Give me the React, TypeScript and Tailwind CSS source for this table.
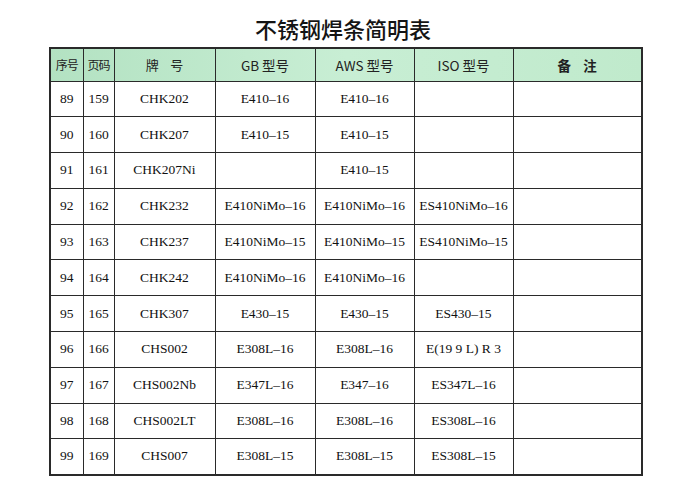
import React from 'react';

const rows: string[][] = [
  ['89', '159', 'CHK202', 'E410–16', 'E410–16', ''],
  ['90', '160', 'CHK207', 'E410–15', 'E410–15', ''],
  ['91', '161', 'CHK207Ni', '', 'E410–15', ''],
  ['92', '162', 'CHK232', 'E410NiMo–16', 'E410NiMo–16', 'ES410NiMo–16'],
  ['93', '163', 'CHK237', 'E410NiMo–15', 'E410NiMo–15', 'ES410NiMo–15'],
  ['94', '164', 'CHK242', 'E410NiMo–16', 'E410NiMo–16', ''],
  ['95', '165', 'CHK307', 'E430–15', 'E430–15', 'ES430–15'],
  ['96', '166', 'CHS002', 'E308L–16', 'E308L–16', 'E(19 9 L) R 3'],
  ['97', '167', 'CHS002Nb', 'E347L–16', 'E347–16', 'ES347L–16'],
  ['98', '168', 'CHS002LT', 'E308L–16', 'E308L–16', 'ES308L–16'],
  ['99', '169', 'CHS007', 'E308L–15', 'E308L–15', 'ES308L–15'],
];

const widths = ['w-[33px]', 'w-[31px]', 'w-[101px]', 'w-[100px]', 'w-[99px]', 'w-[99px]', 'w-[129px]'];

const App: React.FC = () => {
  return (
    <div className="w-[683px] h-[489px] bg-white overflow-hidden">
      {/* Title */}
      <div className="pl-[45px] w-[641px] pt-[14px] h-[47px]">
        <h1 className="text-center text-[22px] leading-[28px] font-medium text-[#141414] [font-family:'Noto_Sans_CJK_SC',sans-serif]">
          不锈钢焊条简明表
        </h1>
      </div>

      {/* Table */}
      <div className="ml-[49px]">
        <table className="border-collapse table-fixed w-[592px] border-2 border-[#2a2a2a]">
          <thead>
            <tr className="h-[33px] bg-gradient-to-r from-[#b3e2c2] via-[#c8eed4] to-[#c0eacc] text-[#222] [font-family:'Noto_Sans_CJK_SC',sans-serif]">
              <th className={`${widths[0]} border border-[#2a2a2a] font-normal text-[12px] tracking-[-1px] p-0`}>序号</th>
              <th className={`${widths[1]} border border-[#2a2a2a] font-normal text-[12px] tracking-[-1px] p-0`}>页码</th>
              <th className={`${widths[2]} border border-[#2a2a2a] font-normal text-[13px] p-0`}>牌&nbsp;&nbsp;&nbsp;&nbsp;号</th>
              <th className={`${widths[3]} border border-[#2a2a2a] font-normal text-[13.5px] p-0`}>GB 型号</th>
              <th className={`${widths[4]} border border-[#2a2a2a] font-normal text-[13.5px] p-0`}>AWS 型号</th>
              <th className={`${widths[5]} border border-[#2a2a2a] font-normal text-[13.5px] p-0`}>ISO 型号</th>
              <th className={`${widths[6]} border border-[#2a2a2a] font-bold text-[13.5px] p-0`}>备&nbsp;&nbsp;&nbsp;&nbsp;注</th>
            </tr>
          </thead>
          <tbody className="[font-family:'Liberation_Serif',serif] text-[13.5px] text-[#111]">
            {rows.map((r) => (
              <tr key={r[0]} className="h-[35.8px]">
                {r.map((c, i) => (
                  <td key={i} className="border border-[#2a2a2a] text-center p-0 whitespace-nowrap">
                    {c}
                  </td>
                ))}
                <td className="border border-[#2a2a2a] p-0" />
              </tr>
            ))}
          </tbody>
        </table>
      </div>
    </div>
  );
};

export default App;
